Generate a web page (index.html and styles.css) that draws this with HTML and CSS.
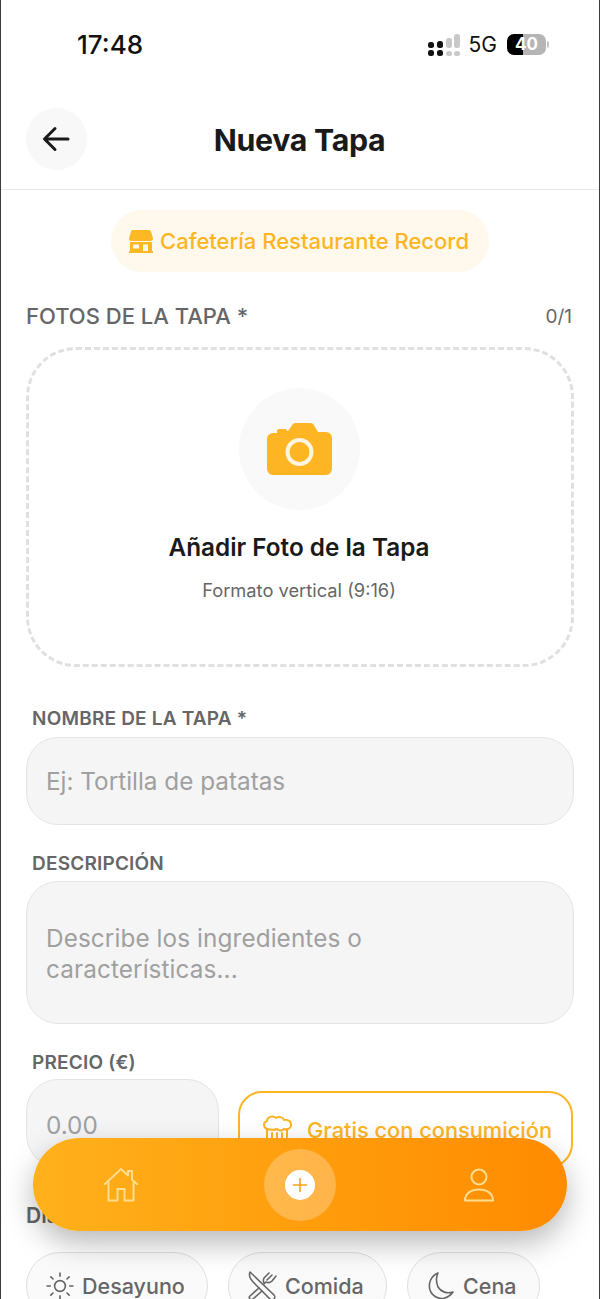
FILE: index.html
```html
<!DOCTYPE html>
<html lang="es">
<head>
    <meta charset="UTF-8">
    <meta name="viewport" content="width=device-width, initial-scale=1.0">
    <title>Nueva Tapa</title>
    <link rel="stylesheet" href="styles.css">
</head>
<body>
    <div class="phone">
        <!-- Status bar -->
        <div class="status-bar">
            <span class="clock">17:48</span>
            <div class="status-icons">
                <svg class="signal" width="34" height="22" viewBox="0 0 34 22">
                    <rect x="1" y="8" width="6" height="6" rx="2.5" fill="#111"/>
                    <rect x="10" y="7" width="6" height="7" rx="2.5" fill="#111"/>
                    <rect x="1" y="16" width="6" height="6" rx="2.5" fill="#111"/>
                    <rect x="10" y="16" width="6" height="6" rx="2.5" fill="#111"/>
                    <rect x="19" y="4" width="6" height="10" rx="2.5" fill="#c9c9c9"/>
                    <rect x="27" y="0" width="6" height="14" rx="2.5" fill="#c9c9c9"/>
                    <rect x="19" y="17" width="6" height="5" rx="2.5" fill="#c9c9c9"/>
                    <rect x="27" y="17" width="6" height="5" rx="2.5" fill="#c9c9c9"/>
                </svg>
                <span class="network">5G</span>
                <div class="battery"><span class="battery-num">40</span></div>
                <span class="battery-tip"></span>
            </div>
        </div>

        <!-- Header -->
        <header class="top-header">
            <button class="back-btn">
                <svg width="28" height="26" viewBox="0 0 28 26" fill="none" stroke="#1a1a1a" stroke-width="3" stroke-linecap="round" stroke-linejoin="round">
                    <path d="M26 13H3M13 2.500 2.500 13 13 23.500"/>
                </svg>
            </button>
            <h1>Nueva Tapa</h1>
        </header>

        <main class="content">
            <div class="venue-row">
                <div class="venue-pill">
                    <svg width="24" height="24" viewBox="0 0 24 24" fill="#fdb924">
                        <path d="M4 1h16a2 2 0 0 1 2 1.500L24 9.500a2.500 2.500 0 0 1-2.500 2.500h-19A2.500 2.500 0 0 1 0 9.500L2 2.500A2 2 0 0 1 4 1z"/>
                        <path fill-rule="evenodd" d="M1 13h22v9h1v2H0v-2h1zM4 15.500v4h6v-4zM14 15.500V22h5v-6.500z"/>
                    </svg>
                    <span>Cafetería Restaurante Record</span>
                </div>
            </div>

            <div class="photos-head">
                <span class="photos-title">FOTOS DE LA TAPA *</span>
                <span class="photos-count">0/1</span>
            </div>

            <div class="dropzone">
                <div class="camera-circle">
                    <svg width="65" height="52" viewBox="0 0 65 52">
                        <path fill="#fdb524" d="M6 10h4V8a2 2 0 0 1 2-2h6a2 2 0 0 1 2 2h1l4.500-6.500A3.500 3.500 0 0 1 28.500 0h15a3.500 3.500 0 0 1 3 1.500L51 9h8a6 6 0 0 1 6 6v31a6 6 0 0 1-6 6H6a6 6 0 0 1-6-6V16a6 6 0 0 1 6-6z"/>
                        <circle cx="32.500" cy="29" r="12" fill="none" stroke="#fff4dd" stroke-width="4"/>
                    </svg>
                </div>
                <div class="drop-title">Añadir Foto de la Tapa</div>
                <div class="drop-sub">Formato vertical (9:16)</div>
            </div>

            <label class="field-label first">NOMBRE DE LA TAPA *</label>
            <div class="input">Ej: Tortilla de patatas</div>

            <label class="field-label">DESCRIPCIÓN</label>
            <div class="input textarea">Describe los ingredientes o<br>características...</div>

            <label class="field-label tight">PRECIO (€)</label>
            <div class="price-row">
                <div class="input price">0.00</div>
                <div class="free-toggle">
                    <svg width="32" height="32" viewBox="0 0 32 32" fill="none" stroke="#fdb524" stroke-width="2" stroke-linecap="round" stroke-linejoin="round">
                        <path d="M5 15C1 13 1 8 5 7c0-4 6-6 9-3 3-2 7-1 8 2 4-1 8 2 7 6-1 3-4 4-7 3-2 2-5 2-7 0-2 1-6 1-10 0z"/>
                        <path d="M5 15v15h20V15M10 19v11M15 19v11M20 19v11"/>
                    </svg>
                    <span>Gratis con consumición</span>
                </div>
            </div>

            <div class="days-label">Días</div>
            <div class="chips">
                <div class="chip chip-breakfast">
                    <svg width="28" height="28" viewBox="0 0 26 26" fill="none" stroke="#666" stroke-width="1.500" stroke-linecap="round">
                        <circle cx="13" cy="13" r="5"/>
                        <path d="M13 1v3M13 22v3M1 13h3M22 13h3M4.500 4.500l2 2M19.500 19.500l2 2M4.500 21.500l2-2M19.500 6.500l2-2"/>
                    </svg>
                    <span>Desayuno</span>
                </div>
                <div class="chip chip-lunch">
                    <svg width="30" height="30" viewBox="0 0 30 30" fill="none" stroke="#666" stroke-width="1.600" stroke-linecap="round" stroke-linejoin="round">
                        <path d="M3 1c-2 5 2 9 6 13l14 14c1 1 3 1 4 0s1-3 0-4z"/>
                        <path d="M12 17 3 25c-1 1-1 2 0 3s2 1 3 0l9-8M17 13l2-2c2 1 4 1 6-1l4-5M22 2l-5 5c-1 2-1 3 0 5M25 4l-5 5"/>
                    </svg>
                    <span>Comida</span>
                </div>
                <div class="chip chip-dinner">
                    <svg width="28" height="30" viewBox="0 0 26 30" fill="none" stroke="#666" stroke-width="1.600" stroke-linecap="round" stroke-linejoin="round">
                        <path d="M10 2C3 5 0 12 2 19c2 6 9 10 15 8 3-1 6-3 8-6-6 2-12 0-15-5C8 11 8 6 10 2z"/>
                    </svg>
                    <span>Cena</span>
                </div>
            </div>
        </main>

        <!-- Floating nav -->
        <nav class="bottom-nav">
            <svg class="nav-icon" width="34" height="34" viewBox="0 0 34 34" fill="none" stroke="#ffdc8f" stroke-width="2" stroke-linecap="round" stroke-linejoin="round">
                <path d="M1 16 17 1l7 6.500V3h4v8.500l5 4.500"/>
                <path d="M4.500 14v18.500h9V21h7v11.500h9V14"/>
            </svg>
            <div class="add-btn">
                <div class="add-dot">
                    <svg width="16" height="16" viewBox="0 0 16 16" fill="none" stroke="#f9a01b" stroke-width="1.600" stroke-linecap="round">
                        <path d="M8 1.500v13M1.500 8h13"/>
                    </svg>
                </div>
            </div>
            <svg class="nav-icon" width="32" height="34" viewBox="0 0 32 34" fill="none" stroke="#ffdc8f" stroke-width="2" stroke-linecap="round" stroke-linejoin="round">
                <circle cx="16" cy="9" r="7.500"/>
                <path d="M2 32.500c0-7 6-11 14-11s14 4 14 11z"/>
            </svg>
        </nav>
    </div>
</body>
</html>
```

FILE: styles.css
```css
* {
    box-sizing: border-box;
}

html, body {
    margin: 0;
    padding: 0;
    height: 1299px;
    overflow: hidden;
}

body {
    background-color: #fff;
    font-family: 'Inter', 'Liberation Sans', sans-serif;
}

.phone {
    position: relative;
    height: 1299px;
    overflow: hidden;
    background-color: #fff;
    border-left: 1px solid #3c3c3c;
    border-right: 1px solid #3c3c3c;
}

/* status bar */
.status-bar {
    display: flex;
    justify-content: space-between;
    align-items: center;
    height: 88px;
    padding: 0 50px 0 76px;
}

.clock {
    font-size: 26px;
    font-weight: 500;
    color: #111;
}

.status-icons {
    display: flex;
    align-items: center;
}

.signal {
    margin-right: 8px;
    margin-top: 1px;
}

.network {
    font-size: 21px;
    color: #111;
    margin-right: 10px;
}

.battery {
    width: 39px;
    height: 21px;
    border-radius: 7px;
    background: linear-gradient(to right, #000 42%, #b5b5b5 42%);
    display: flex;
    align-items: center;
    justify-content: center;
}

.battery-num {
    font-size: 17px;
    font-weight: 700;
    color: #fff;
}

.battery-tip {
    width: 2px;
    height: 7px;
    margin-left: 1px;
    background-color: #c4c4c4;
    border-radius: 0 2px 2px 0;
}

/* header */
.top-header {
    display: flex;
    align-items: center;
    justify-content: center;
    position: relative;
    height: 102px;
    padding-top: 2px;
    border-bottom: 1px solid #e8e8e8;
}

.top-header h1 {
    margin: 0 1px 0 0;
    font-size: 30.3px;
    font-weight: 700;
    color: #1a1a1a;
    letter-spacing: -0.3px;
}

.back-btn {
    position: absolute;
    left: 25px;
    top: 20px;
    width: 61px;
    height: 62px;
    padding: 0 2px 0 0;
    border: none;
    border-radius: 50%;
    background-color: #f8f8f8;
    display: flex;
    align-items: center;
    justify-content: center;
}

/* form */
.content {
    padding: 20px 25px 0;
}

.venue-row {
    display: flex;
    justify-content: center;
}

.venue-pill {
    display: flex;
    align-items: center;
    gap: 7px;
    height: 62px;
    padding: 0 20px 0 18px;
    border-radius: 31px;
    background-color: #fff8ec;
    color: #fdb524;
    font-size: 22px;
    font-weight: 500;
}

.photos-head {
    display: flex;
    justify-content: space-between;
    align-items: center;
    margin-top: 30px;
    height: 28px;
}

.photos-title {
    font-size: 22px;
    font-weight: 500;
    color: #666;
}

.photos-count {
    font-size: 19px;
    color: #666;
    margin-right: 2px;
}

.dropzone {
    display: flex;
    flex-direction: column;
    align-items: center;
    height: 320px;
    margin-top: 17px;
    padding: 38px 2px 0 0;
    border: 3px dashed #e0e0e0;
    border-radius: 50px;
}

.camera-circle {
    display: flex;
    align-items: center;
    justify-content: center;
    width: 121px;
    height: 122px;
    border-radius: 50%;
    background-color: #f9f9f9;
}

.drop-title {
    margin-top: 22px;
    font-size: 24.3px;
    font-weight: 600;
    color: #1a1a1a;
}

.drop-sub {
    margin-top: 17px;
    font-size: 18.3px;
    color: #666;
}

.field-label {
    display: block;
    margin: 28px 0 6px 6px;
    font-size: 19px;
    font-weight: 600;
    letter-spacing: 0.2px;
    color: #666;
    line-height: 22px;
}

.field-label.first {
    margin: 41px 0 7px 6px;
}

.field-label.tight {
    margin-bottom: 4px;
}

.input {
    height: 88px;
    padding: 0 19px;
    display: flex;
    align-items: center;
    border: 1px solid #e4e4e4;
    border-radius: 32px;
    background-color: #f5f5f5;
    color: #a0a0a0;
    font-size: 24.3px;
}

.input.textarea {
    display: block;
    height: 143px;
    padding-top: 41px;
    line-height: 31px;
    letter-spacing: 0.1px;
}

.price-row {
    display: flex;
    align-items: center;
    gap: 19px;
}

.input.price {
    width: 193px;
    flex: none;
    padding-top: 3px;
}

.free-toggle {
    display: flex;
    align-items: center;
    gap: 13px;
    flex: 1;
    height: 77px;
    margin-top: 13px;
    margin-right: 1px;
    padding-left: 22px;
    border: 2px solid #fdb524;
    border-radius: 24px;
    color: #fdb524;
    font-size: 21.8px;
    font-weight: 500;
}

.days-label {
    margin-top: 35px;
    font-size: 21px;
    font-weight: 600;
    color: #666;
    line-height: 26px;
}

.chips {
    display: flex;
    gap: 20px;
    margin-top: 23px;
}

.chip {
    display: flex;
    align-items: center;
    height: 68px;
    border: 1px solid #e0e0e0;
    border-radius: 34px;
    background-color: #fafafa;
    color: #666;
    font-size: 21.5px;
    font-weight: 500;
    gap: 8px;
}

.chip-breakfast {
    width: 182px;
    padding-left: 19px;
}

.chip-lunch {
    width: 159px;
    padding-left: 18px;
}

.chip-dinner {
    width: 133px;
    padding-left: 19px;
}

/* floating nav sits over the form */
.bottom-nav {
    position: absolute;
    left: 32px;
    top: 1138px;
    width: 534px;
    height: 93px;
    padding: 0 72px 0 71px;
    display: flex;
    align-items: center;
    justify-content: space-between;
    border-radius: 47px;
    background: linear-gradient(90deg, #ffb11b, #ff8b00);
    box-shadow: 0 12px 30px rgba(0, 0, 0, 0.28);
}

.add-btn {
    display: flex;
    align-items: center;
    justify-content: center;
    width: 72px;
    height: 72px;
    margin-right: 2px;
    border-radius: 50%;
    background-color: rgba(255, 255, 255, 0.25);
}

.add-dot {
    display: flex;
    align-items: center;
    justify-content: center;
    width: 30px;
    height: 30px;
    border-radius: 50%;
    background-color: #fff;
}
```
